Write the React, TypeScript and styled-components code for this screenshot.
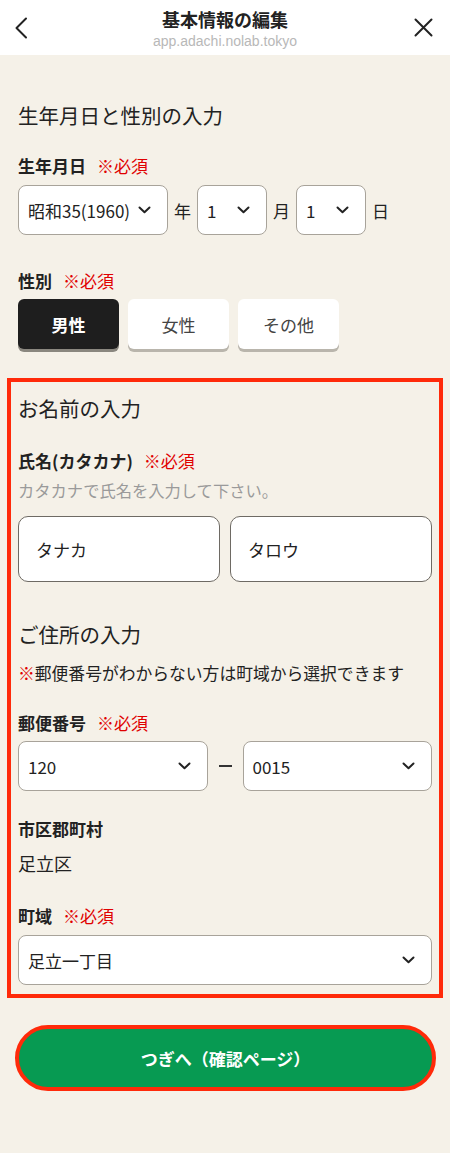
import React from "react";
import styled, { createGlobalStyle } from "styled-components";

const FONT = `"Noto Sans CJK JP", "Noto Sans", sans-serif`;

const GlobalStyle = createGlobalStyle`
  html, body {
    margin: 0;
    padding: 0;
    background: #f5f1e8;
  }
  body {
    font-family: ${FONT};
    color: #222;
  }
  * {
    box-sizing: border-box;
  }
`;

const Page = styled.div`
  width: 450px;
  min-height: 1153px;
  background: #f5f1e8;
  display: flex;
  flex-direction: column;
`;

const Header = styled.header`
  height: 55px;
  background: #fff;
  display: grid;
  grid-template-columns: 56px 1fr 56px;
  align-items: center;
`;

const HeaderButton = styled.div<{ $align: "left" | "right" }>`
  display: flex;
  justify-content: ${(p) => (p.$align === "left" ? "flex-start" : "flex-end")};
  padding: ${(p) => (p.$align === "left" ? "0 0 0 14px" : "0 17px 0 0")};
  color: #222;
`;

const HeaderTitle = styled.div`
  display: flex;
  flex-direction: column;
  align-items: center;
  padding-top: 1px;
`;

const Title = styled.div`
  font-size: 18px;
  font-weight: 700;
  line-height: 22px;
  color: #222;
`;

const Url = styled.div`
  font-family: "Liberation Sans", Arial, sans-serif;
  font-size: 14px;
  line-height: 16px;
  color: #b8b8b8;
  margin-top: 3px;
`;

const Section = styled.section`
  display: flex;
  flex-direction: column;
  padding: 48px 18px 0;
`;

const RedBox = styled.section`
  margin: 29px 7px 0;
  border: 4px solid #ff2a0a;
  padding: 14px 7px 9px;
  display: flex;
  flex-direction: column;
`;

const SectionTitle = styled.h2<{ $top?: number }>`
  margin: ${(p) => p.$top ?? 0}px 0 0;
  font-size: 20.5px;
  font-weight: 400;
  line-height: 24px;
  color: #222;
`;

const Label = styled.div<{ $top: number }>`
  margin-top: ${(p) => p.$top}px;
  font-size: 17px;
  font-weight: 700;
  line-height: 22px;
  display: flex;
  align-items: center;
  gap: 11px;
  color: #222;
`;

const Required = styled.span`
  font-weight: 400;
  color: #e00000;
`;

const Hint = styled.div`
  margin-top: 7px;
  font-size: 16.3px;
  line-height: 22px;
  color: #9a9a9a;
`;

const Note = styled.div`
  margin-top: 16px;
  font-size: 16.8px;
  line-height: 22px;
  color: #222;

  span {
    color: #e00000;
  }
`;

const Value = styled.div`
  margin-top: 12px;
  font-size: 18px;
  line-height: 22px;
  color: #222;
`;

const Row = styled.div<{ $top: number; $gap?: number }>`
  margin-top: ${(p) => p.$top}px;
  display: flex;
  align-items: center;
  gap: ${(p) => p.$gap ?? 0}px;
`;

const SelectBox = styled.div<{ $width?: number }>`
  ${(p) => (p.$width ? `width: ${p.$width}px;` : "flex: 1;")}
  height: 50px;
  background: #fff;
  border: 1px solid #a8a39a;
  border-radius: 8px;
  display: flex;
  align-items: center;
  justify-content: space-between;
  padding: 0 16px 0 9px;
  font-size: 17px;
  color: #222;
`;

const Unit = styled.span`
  width: 29px;
  text-align: center;
  font-size: 17px;
  color: #222;
`;

const Dash = styled.span`
  width: 35px;
  display: flex;
  justify-content: center;

  &::before {
    content: "";
    width: 13px;
    height: 2px;
    background: #333;
  }
`;

const GenderButton = styled.div<{ $active?: boolean }>`
  width: 101px;
  height: 50px;
  border-radius: 6px;
  display: flex;
  align-items: center;
  justify-content: center;
  font-size: 17px;
  font-weight: ${(p) => (p.$active ? 700 : 400)};
  color: ${(p) => (p.$active ? "#fff" : "#444")};
  background: ${(p) => (p.$active ? "#1e1e1e" : "#fff")};
  box-shadow: 0 3px 0 ${(p) => (p.$active ? "#8a877f" : "#b9b5ac")};
`;

const TextInput = styled.div`
  flex: 1;
  height: 66px;
  background: #fff;
  border: 1px solid #6e6a64;
  border-radius: 10px;
  display: flex;
  align-items: center;
  padding: 0 17px;
  font-size: 17px;
  color: #222;
`;

const NextButton = styled.button`
  margin: 27px 14px 0 15px;
  height: 66px;
  border: 4px solid #ff2a0a;
  border-radius: 33px;
  background: #079a52;
  color: #fff;
  font-family: ${FONT};
  font-size: 17px;
  font-weight: 700;
  display: flex;
  align-items: center;
  justify-content: center;
`;

const Chevron = () => (
  <svg width="13" height="8" viewBox="0 0 13 8" fill="none">
    <path d="M1.5 1.5L6.5 6.2L11.5 1.5" stroke="#222" strokeWidth="2" strokeLinecap="round" strokeLinejoin="round" />
  </svg>
);

const BackIcon = () => (
  <svg width="16" height="22" viewBox="0 0 16 22" fill="none">
    <path d="M12 1.5L2.5 11L12 20.5" stroke="#222" strokeWidth="2" strokeLinecap="round" strokeLinejoin="round" />
  </svg>
);

const CloseIcon = () => (
  <svg width="19" height="19" viewBox="0 0 19 19" fill="none">
    <path d="M1.5 1.5L17.5 17.5M17.5 1.5L1.5 17.5" stroke="#222" strokeWidth="2" strokeLinecap="round" />
  </svg>
);

const Select = ({ value, width }: { value: string; width?: number }) => (
  <SelectBox $width={width}>
    <span>{value}</span>
    <Chevron />
  </SelectBox>
);

export default function App() {
  return (
    <Page>
      <GlobalStyle />
      <Header>
        <HeaderButton $align="left">
          <BackIcon />
        </HeaderButton>
        <HeaderTitle>
          <Title>基本情報の編集</Title>
          <Url>app.adachi.nolab.tokyo</Url>
        </HeaderTitle>
        <HeaderButton $align="right">
          <CloseIcon />
        </HeaderButton>
      </Header>

      <Section>
        <SectionTitle>生年月日と性別の入力</SectionTitle>
        <Label $top={28}>
          生年月日<Required>※必須</Required>
        </Label>
        <Row $top={8}>
          <Select value="昭和35(1960)" width={150} />
          <Unit>年</Unit>
          <Select value="1" width={70} />
          <Unit>月</Unit>
          <Select value="1" width={70} />
          <Unit>日</Unit>
        </Row>
        <Label $top={35}>
          性別<Required>※必須</Required>
        </Label>
        <Row $top={7} $gap={9}>
          <GenderButton $active>男性</GenderButton>
          <GenderButton>女性</GenderButton>
          <GenderButton>その他</GenderButton>
        </Row>
      </Section>

      <RedBox>
        <SectionTitle>お名前の入力</SectionTitle>
        <Label $top={30}>
          氏名(カタカナ)<Required>※必須</Required>
        </Label>
        <Hint>カタカナで氏名を入力して下さい。</Hint>
        <Row $top={15} $gap={10}>
          <TextInput>タナカ</TextInput>
          <TextInput>タロウ</TextInput>
        </Row>

        <SectionTitle $top={40}>ご住所の入力</SectionTitle>
        <Note>
          <span>※</span>郵便番号がわからない方は町域から選択できます
        </Note>
        <Label $top={28}>
          郵便番号<Required>※必須</Required>
        </Label>
        <Row $top={7}>
          <Select value="120" />
          <Dash />
          <Select value="0015" />
        </Row>
        <Label $top={27}>市区郡町村</Label>
        <Value>足立区</Value>
        <Label $top={31}>
          町域<Required>※必須</Required>
        </Label>
        <Row $top={8}>
          <Select value="足立一丁目" />
        </Row>
      </RedBox>

      <NextButton>つぎへ（確認ページ）</NextButton>
    </Page>
  );
}
